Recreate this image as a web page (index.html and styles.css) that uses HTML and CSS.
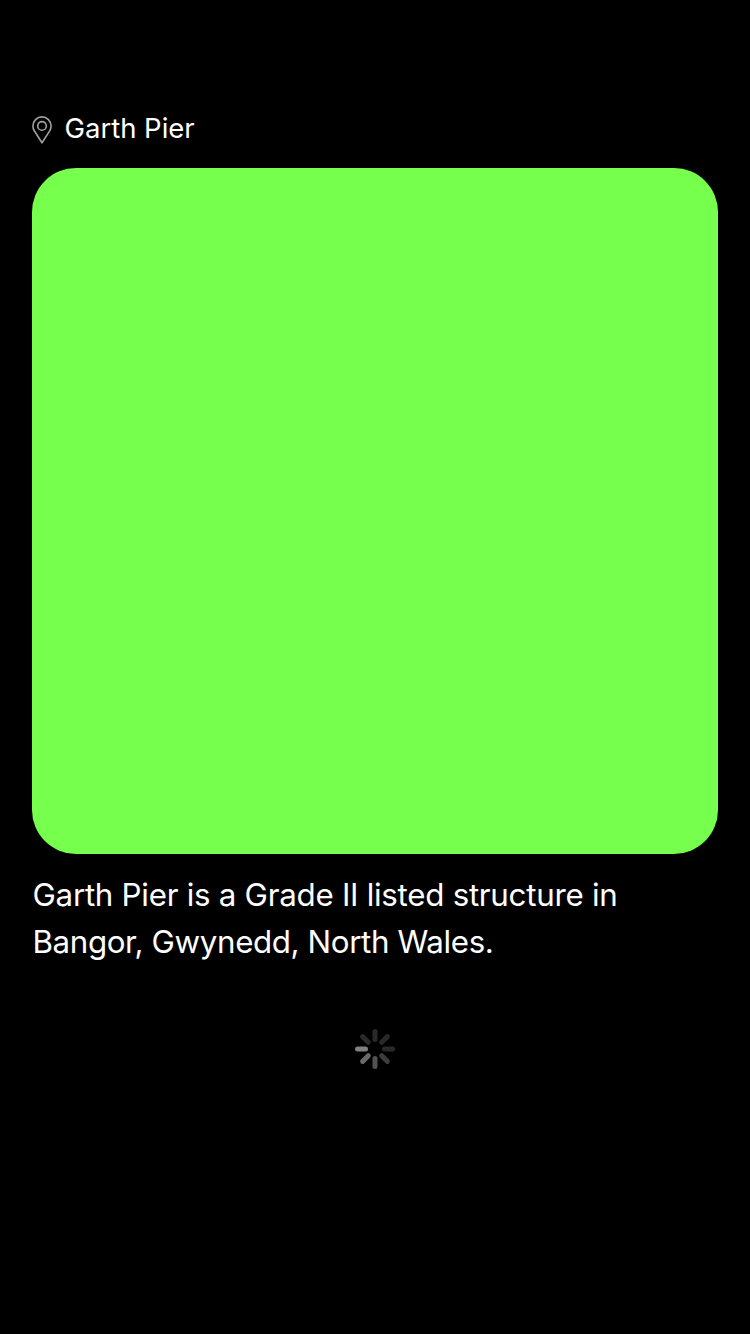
FILE: index.html
```html
<!DOCTYPE html>
<html lang="en">
<head>
<meta charset="utf-8">
<title>Garth Pier</title>
<link rel="stylesheet" href="styles.css">
</head>
<body>
<main class="screen">
  <header class="place">
    <svg class="pin" viewBox="0 0 20 28" width="20" height="28" fill="none" stroke="#a0a0a0" stroke-width="1.6">
      <path d="M10 26.8 L2.3 14.8 C1.3 13.2 .9 11.7 .9 10 A9.1 9.1 0 0 1 19.1 10 C19.1 11.7 18.7 13.2 17.7 14.8 Z" stroke-linejoin="round"/>
      <circle cx="10" cy="9.9" r="4.3"/>
    </svg>
    <h1 class="name">Garth Pier</h1>
  </header>
  <div class="photo"></div>
  <p class="caption">Garth Pier is a Grade II listed structure in<br><span class="caption-end">Bangor, Gwynedd, North Wales.</span></p>
  <svg class="spinner" viewBox="-20 -20 40 40" width="40" height="40" stroke-width="5" stroke-linecap="round">
    <path d="M0-9.5V-17.5" stroke="#29292a"/>
    <path d="M0-9.5V-17.5" stroke="#29292a" transform="rotate(45)"/>
    <path d="M0-9.5V-17.5" stroke="#29292a" transform="rotate(90)"/>
    <path d="M0-9.5V-17.5" stroke="#3c3c3d" transform="rotate(135)"/>
    <path d="M0-9.5V-17.5" stroke="#525254" transform="rotate(180)"/>
    <path d="M0-9.5V-17.5" stroke="#69696b" transform="rotate(225)"/>
    <path d="M0-9.5V-17.5" stroke="#808084" transform="rotate(270)"/>
    <path d="M0-9.5V-17.5" stroke="#29292a" transform="rotate(315)"/>
  </svg>
</main>
</body>
</html>
```
FILE: styles.css
```css
body { margin: 0; background: #000; color: #fff; font-family: Inter, sans-serif; }
.screen { box-sizing: border-box; height: 1334px; padding: 108px 32px 0; display: flex; flex-direction: column; }
.place { display: flex; align-items: center; height: 40px; gap: 12.5px; margin-bottom: 20px; }
.pin { margin-top: 4px; }
.name { margin: 0; font-size: 27.5px; line-height: 40px; font-weight: 400; letter-spacing: -0.02px; }
.photo { height: 686px; border-radius: 44px; background: #77ff4d; }
.caption { margin: 18px 0 0 0.5px; font-size: 31.3px; line-height: 46.5px; letter-spacing: -0.27px; white-space: nowrap; }
.caption-end { letter-spacing: -0.38px; }
.spinner { align-self: center; margin-top: 64px; }
```
